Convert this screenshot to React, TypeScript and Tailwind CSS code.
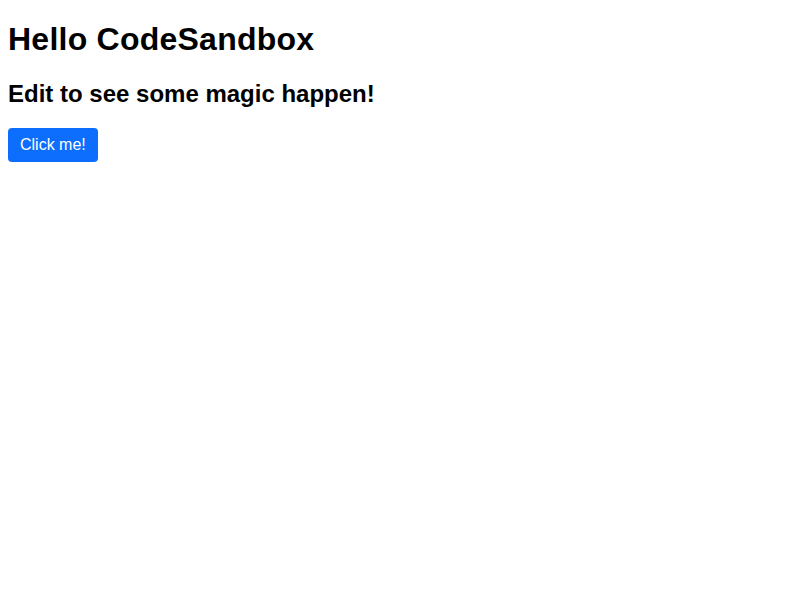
export default function App() {
  return (
    <div className="p-2 font-['Liberation_Sans',Arial,sans-serif] text-black">
      <h1 className="mt-[13.44px] mb-[21.44px] text-[32px] leading-[37px] font-bold tracking-[0.24px]">Hello CodeSandbox</h1>
      <h2 className="mb-[20px] text-[24px] leading-[28px] font-bold">Edit to see some magic happen!</h2>
      <button className="h-[34px] px-3 rounded bg-[#0d6efd] text-white text-base leading-[18px]">
        Click me!
      </button>
    </div>
  );
}
